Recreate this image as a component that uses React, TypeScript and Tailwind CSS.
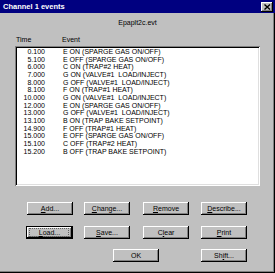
import React from "react";

const rows: [string, string][] = [
  ["0.100", "E ON (SPARGE GAS ON/OFF)"],
  ["5.100", "E OFF (SPARGE GAS ON/OFF)"],
  ["6.000", "C ON (TRAP#2 HEAT)"],
  ["7.000", "G ON (VALVE#1  LOAD/INJECT)"],
  ["8.000", "G OFF (VALVE#1  LOAD/INJECT)"],
  ["8.100", "F ON (TRAP#1 HEAT)"],
  ["10.000", "G ON (VALVE#1  LOAD/INJECT)"],
  ["12.000", "E ON (SPARGE GAS ON/OFF)"],
  ["13.000", "G OFF (VALVE#1  LOAD/INJECT)"],
  ["13.100", "B ON (TRAP BAKE SETPOINT)"],
  ["14.900", "F OFF (TRAP#1 HEAT)"],
  ["15.000", "E OFF (SPARGE GAS ON/OFF)"],
  ["15.100", "C OFF (TRAP#2 HEAT)"],
  ["15.200", "B OFF (TRAP BAKE SETPOINT)"],
];

function Btn({ label, u, def, className }: { label: string; u?: number; def?: boolean; className?: string }) {
  const content =
    u === undefined ? (
      label
    ) : (
      <>
        {label.slice(0, u)}
        <span className="underline">{label[u]}</span>
        {label.slice(u + 1)}
      </>
    );
  return (
    <div
      className={
        (def
          ? "relative w-[47px] h-[13px] flex items-center justify-center bg-[#c0c0c0] shadow-[inset_0_0_0_1px_#000,inset_-2px_-2px_0_#000,inset_2px_2px_0_#fff,inset_-3px_-3px_0_#808080]"
          : "relative w-[46px] h-[13px] flex items-center justify-center bg-[#c0c0c0] shadow-[inset_-1px_-1px_0_#000,inset_1px_1px_0_#fff,inset_-2px_-2px_0_#808080]") +
        " " +
        (className ?? "")
      }
    >
      {def && (
        <div className="absolute left-[3px] top-[2px] right-[4px] bottom-[2px] border border-dotted border-[#606060]" />
      )}
      <span className="relative text-[7px] leading-[8px] text-black">{content}</span>
    </div>
  );
}

export default function App() {
  return (
    <div
      className="w-[275px] h-[273px] bg-[#c0c0c0] flex flex-col shadow-[inset_-1px_-1px_0_#000,inset_-2px_-2px_0_#808080] overflow-hidden"
      style={{ fontFamily: '"Liberation Sans", Arial, sans-serif' }}
    >
      <div className="h-[13px] bg-[#000080] flex items-center justify-between pl-[3px] pr-[2px]">
        <span className="text-white font-bold text-[7.5px] leading-[9px]">Channel 1 events</span>
        <div className="w-[12px] h-[10px] bg-[#c0c0c0] flex items-center justify-center shadow-[inset_-1px_-1px_0_#000,inset_1px_1px_0_#fff,inset_-2px_-2px_0_#808080]">
          <svg width="7" height="6" viewBox="0 0 7 6">
            <path d="M0.5 0.5 L6 5.5 M6 0.5 L0.5 5.5" stroke="#000" strokeWidth="1.4" />
          </svg>
        </div>
      </div>
      <div className="h-[1px]" />
      <div className="mt-[4px] h-[9px] flex justify-center">
        <span className="text-[7px] leading-[9px] text-black">Epaplt2c.evt</span>
      </div>
      <div className="mt-[8px] h-[9px] flex text-[7px] leading-[9px] text-black">
        <span className="ml-[16px] w-[46px]">Time</span>
        <span>Event</span>
      </div>
      <div className="mt-[2px] ml-[15px] w-[245px] h-[140px] bg-white p-[2px] shadow-[inset_1px_1px_0_#808080,inset_-1px_-1px_0_#fff,inset_2px_2px_0_#000,inset_-2px_-2px_0_#dfdfdf]">
        <div className="flex flex-col">
          {rows.map(([t, e], i) => (
            <div key={i} className="flex text-[7px] leading-[7.65px] text-black whitespace-pre">
              <span className="w-[28px] text-right">{t}</span>
              <span className="ml-[18px]">{e}</span>
            </div>
          ))}
        </div>
      </div>
      <div className="mt-[16px] flex ml-[27px]">
        <Btn label="Add..." u={0} />
        <Btn label="Change..." u={0} className="ml-[11px]" />
        <Btn label="Remove" u={0} className="ml-[13px]" />
        <Btn label="Describe..." u={0} className="ml-[12px]" />
      </div>
      <div className="mt-[11px] flex ml-[26px]">
        <Btn label="Load..." u={0} def />
        <Btn label="Save..." u={0} className="ml-[11px]" />
        <Btn label="Clear" u={1} className="ml-[13px]" />
        <Btn label="Print" u={0} className="ml-[12px]" />
      </div>
      <div className="mt-[10px] flex ml-[113px]">
        <Btn label="OK" />
        <Btn label="Shift..." u={2} className="ml-[42px]" />
      </div>
    </div>
  );
}
